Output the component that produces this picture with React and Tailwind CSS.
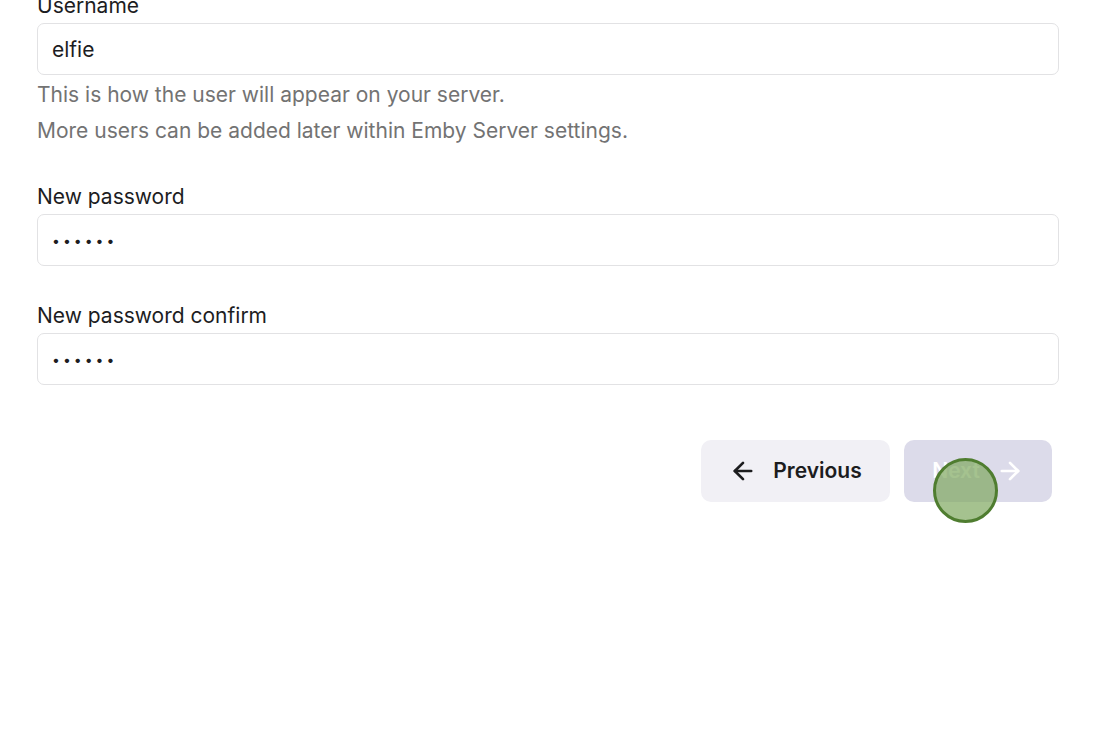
import { ArrowLeft, ArrowRight } from 'lucide-react'

function Field({ label, children, className = '' }) {
  return (
    <div className={className}>
      <label className="block text-[21px] leading-[24px] text-[#1d1d1f]">{label}</label>
      <div className="mt-[5px]">{children}</div>
    </div>
  )
}

function TextInput({ type = 'text', value }) {
  const text = type === 'password' ? 'text-[14px] tracking-[3px]' : 'text-[21px]'
  return (
    <input
      type={type}
      defaultValue={value}
      readOnly
      className={`block w-full h-[52px] rounded-[7px] border border-[#e2e2e4] bg-white px-[14px] leading-[24px] text-[#1d1d1f] outline-none ${text}`}
    />
  )
}

export default function App() {
  return (
    <div className="relative min-h-[756px] w-[1120px] overflow-hidden bg-white font-['Inter',sans-serif]">
      <div className="pl-[37px] pr-[61px] -mt-[6px]">
        <Field label="Username">
          <TextInput value="elfie" />
        </Field>
        <p className="mt-[8px] text-[21px] leading-[24px] text-[#737373]">
          This is how the user will appear on your server.
        </p>
        <p className="mt-[12px] text-[21px] leading-[24px] text-[#737373]">
          More users can be added later within Emby Server settings.
        </p>

        <Field label="New password" className="mt-[42px]">
          <TextInput type="password" value="123456" />
        </Field>

        <Field label="New password confirm" className="mt-[38px]">
          <TextInput type="password" value="123456" />
        </Field>

        <div className="mt-[55px] flex justify-end gap-[14px] pr-[7px]">
          <button className="flex h-[62px] w-[189px] items-center justify-center gap-[16px] rounded-[10px] bg-[#f1f0f5] text-[21px] font-semibold text-[#1c1c1e]">
            <ArrowLeft className="h-[28px] w-[28px]" strokeWidth={2.3} />
            <span>Previous</span>
          </button>
          <button
            disabled
            className="flex h-[62px] w-[148px] items-center justify-center gap-[16px] rounded-[10px] bg-[#dcdbea] text-[21px] font-semibold text-white"
          >
            <span>Next</span>
            <ArrowRight className="h-[28px] w-[28px]" strokeWidth={2.3} />
          </button>
        </div>
      </div>

      {/* touch indicator */}
      <div className="pointer-events-none absolute left-[933px] top-[458px] h-[65px] w-[65px] rounded-full border-[3px] border-[#4f7d30] bg-[#7fa860]/70" />
    </div>
  )
}
